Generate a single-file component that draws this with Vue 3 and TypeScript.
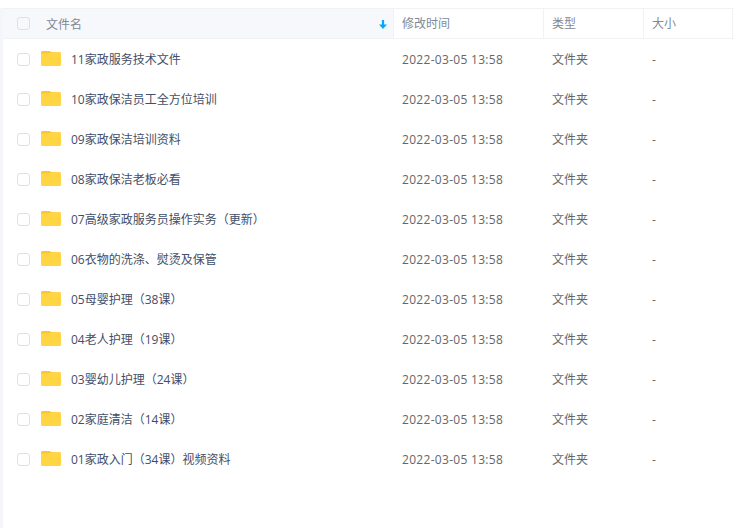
<script setup lang="ts">
interface Row { name: string }
const rows: Row[] = [
  { name: '11家政服务技术文件' },
  { name: '10家政保洁员工全方位培训' },
  { name: '09家政保洁培训资料' },
  { name: '08家政保洁老板必看' },
  { name: '07高级家政服务员操作实务（更新）' },
  { name: '06衣物的洗涤、熨烫及保管' },
  { name: '05母婴护理（38课）' },
  { name: '04老人护理（19课）' },
  { name: '03婴幼儿护理（24课）' },
  { name: '02家庭清洁（14课）' },
  { name: '01家政入门（34课）视频资料' },
]
</script>

<template>
  <div class="page">
    <div class="table">
      <div class="head">
        <div class="c-name hname">
          <span class="check"></span>
          <span class="hlabel">文件名</span>
          <svg class="sort" width="8" height="9" viewBox="0 0 8 9">
            <path d="M2.9 0h2.2v4.4H8L4 9 0 4.4h2.9z" fill="#06a7ff" />
          </svg>
        </div>
        <div class="c-time hcell">修改时间</div>
        <div class="c-type hcell">类型</div>
        <div class="c-size hcell">大小</div>
      </div>
      <div v-for="row in rows" :key="row.name" class="row">
        <div class="c-name rname">
          <span class="check"></span>
          <svg class="folder" width="20" height="15" viewBox="0 0 20 15">
            <path d="M1.5 1H18.5C19.3 1 20 1.7 20 2.5V13.5C20 14.3 19.3 15 18.5 15H1.5C.7 15 0 14.3 0 13.5V2.5C0 1.7 .7 1 1.5 1Z" fill="#ffd544" />
            <path d="M1.5 0H8C8.8 0 9.4 .3 9.9 .8L11 2H9.5C8.8 2 8.4 2.2 7.8 2.5H0V1.5C0 .7 .7 0 1.5 0Z" fill="#fcc72e" />
          </svg>
          <span class="fname">{{ row.name }}</span>
        </div>
        <div class="c-time cell time">2022-03-05 13:58</div>
        <div class="c-type cell">文件夹</div>
        <div class="c-size cell">-</div>
      </div>
    </div>
  </div>
</template>

<style>
html, body { margin: 0; background: #fff; }
</style>

<style scoped>
.page {
  width: 735px;
  height: 528px;
  box-sizing: border-box;
  overflow: hidden;
  padding: 8px 0 0 3px;
  font-family: "Open Sans", "Noto Sans CJK SC", sans-serif;
  font-size: 12px;
  background: #fff;
  background-image: linear-gradient(#f5f6fa, #f5f6fa);
  background-size: 3px 100%;
  background-repeat: no-repeat;
  background-position: 0 8px;
}
.table { width: 731px; }
.head {
  display: flex;
  height: 31px;
  box-sizing: border-box;
  border-top: 1px solid #f1f2f4;
  border-bottom: 1px solid #f1f2f4;
  color: #818999;
}
.c-name { width: 390px; flex: none; display: flex; align-items: center; box-sizing: border-box; }
.c-time { width: 150px; flex: none; }
.c-type { width: 100px; flex: none; }
.c-size { width: 90px; flex: none; }
.hname { background: #f7f8fc; padding-left: 14px; position: relative; }
.hlabel { margin-left: 16px; }
.sort { position: absolute; right: 6px; top: 11px; }
.hcell {
  box-sizing: border-box;
  padding-left: 8px;
  line-height: 29px;
  border-left: 1px solid #f1f2f4;
}
.c-size.hcell { border-right: 1px solid #f1f2f4; }
.check {
  width: 13px;
  height: 13px;
  box-sizing: border-box;
  flex: none;
  border: 1px solid #dfe0e3;
  border-radius: 3px;
  background: #fff;
  display: block;
}
.hname .check { background: #f7f8fc; }
.row { display: flex; height: 40px; color: #666; }
.rname { padding-left: 14px; color: #424e67; }
.folder { margin-left: 11px; margin-top: -1px; flex: none; }
.fname { margin-left: 10px; white-space: nowrap; }
.cell { line-height: 38px; padding: 2px 0 0 9px; box-sizing: border-box; }
.time { letter-spacing: 0.3px; }
</style>
